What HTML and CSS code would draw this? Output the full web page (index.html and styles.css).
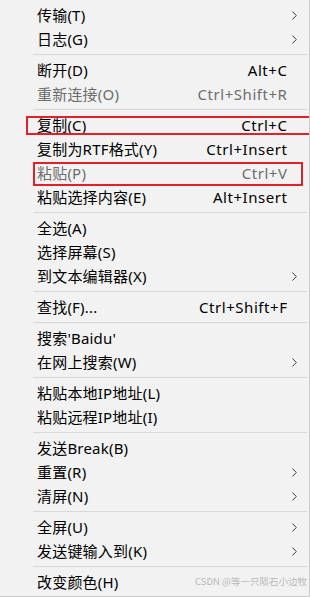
FILE: index.html
```html
<!DOCTYPE html>
<html lang="zh-CN">
<head>
<meta charset="utf-8">
<link rel="stylesheet" href="styles.css">
</head>
<body>
<div class="menu">
  <div class="item"><span class="label">传输(T)</span><span class="key"></span><span class="sub"><svg width="5" height="9" viewBox="0 0 5 9"><path d="M0.5 0.5 L4.3 4.5 L0.5 8.5" fill="none" stroke="#404040" stroke-width="1"/></svg></span></div>
  <div class="item"><span class="label">日志(G)</span><span class="key"></span><span class="sub"><svg width="5" height="9" viewBox="0 0 5 9"><path d="M0.5 0.5 L4.3 4.5 L0.5 8.5" fill="none" stroke="#404040" stroke-width="1"/></svg></span></div>
  <div class="sep"></div>
  <div class="item"><span class="label">断开(D)</span><span class="key">Alt+C</span><span class="sub"></span></div>
  <div class="item disabled"><span class="label">重新连接(O)</span><span class="key">Ctrl+Shift+R</span><span class="sub"></span></div>
  <div class="sep"></div>
  <div class="item"><span class="label">复制(C)</span><span class="key">Ctrl+C</span><span class="sub"></span><span class="mark mark-copy"></span></div>
  <div class="item"><span class="label">复制为RTF格式(Y)</span><span class="key">Ctrl+Insert</span><span class="sub"></span></div>
  <div class="item disabled"><span class="label">粘贴(P)</span><span class="key">Ctrl+V</span><span class="sub"></span><span class="mark mark-paste"></span></div>
  <div class="item"><span class="label">粘贴选择内容(E)</span><span class="key">Alt+Insert</span><span class="sub"></span></div>
  <div class="sep"></div>
  <div class="item"><span class="label">全选(A)</span><span class="key"></span><span class="sub"></span></div>
  <div class="item"><span class="label">选择屏幕(S)</span><span class="key"></span><span class="sub"></span></div>
  <div class="item"><span class="label">到文本编辑器(X)</span><span class="key"></span><span class="sub"><svg width="5" height="9" viewBox="0 0 5 9"><path d="M0.5 0.5 L4.3 4.5 L0.5 8.5" fill="none" stroke="#404040" stroke-width="1"/></svg></span></div>
  <div class="sep"></div>
  <div class="item"><span class="label">查找(F)...</span><span class="key">Ctrl+Shift+F</span><span class="sub"></span></div>
  <div class="sep"></div>
  <div class="item"><span class="label">搜索'Baidu'</span><span class="key"></span><span class="sub"></span></div>
  <div class="item"><span class="label">在网上搜索(W)</span><span class="key"></span><span class="sub"><svg width="5" height="9" viewBox="0 0 5 9"><path d="M0.5 0.5 L4.3 4.5 L0.5 8.5" fill="none" stroke="#404040" stroke-width="1"/></svg></span></div>
  <div class="sep"></div>
  <div class="item"><span class="label">粘贴本地IP地址(L)</span><span class="key"></span><span class="sub"></span></div>
  <div class="item"><span class="label">粘贴远程IP地址(I)</span><span class="key"></span><span class="sub"></span></div>
  <div class="sep"></div>
  <div class="item"><span class="label">发送Break(B)</span><span class="key"></span><span class="sub"></span></div>
  <div class="item"><span class="label">重置(R)</span><span class="key"></span><span class="sub"><svg width="5" height="9" viewBox="0 0 5 9"><path d="M0.5 0.5 L4.3 4.5 L0.5 8.5" fill="none" stroke="#404040" stroke-width="1"/></svg></span></div>
  <div class="item"><span class="label">清屏(N)</span><span class="key"></span><span class="sub"><svg width="5" height="9" viewBox="0 0 5 9"><path d="M0.5 0.5 L4.3 4.5 L0.5 8.5" fill="none" stroke="#404040" stroke-width="1"/></svg></span></div>
  <div class="sep"></div>
  <div class="item"><span class="label">全屏(U)</span><span class="key"></span><span class="sub"><svg width="5" height="9" viewBox="0 0 5 9"><path d="M0.5 0.5 L4.3 4.5 L0.5 8.5" fill="none" stroke="#404040" stroke-width="1"/></svg></span></div>
  <div class="item"><span class="label">发送键输入到(K)</span><span class="key"></span><span class="sub"><svg width="5" height="9" viewBox="0 0 5 9"><path d="M0.5 0.5 L4.3 4.5 L0.5 8.5" fill="none" stroke="#404040" stroke-width="1"/></svg></span></div>
  <div class="sep"></div>
  <div class="item"><span class="label">改变颜色(H)</span><span class="key"></span><span class="sub"></span><span class="watermark">CSDN @等一只陨石小边牧</span></div>
</div>
</body>
</html>
```
FILE: styles.css
```css
html, body {
  margin: 0;
  padding: 0;
  background: #f2f2f2;
}
body {
  width: 310px;
  height: 597px;
  overflow: hidden;
}
.menu {
  position: relative;
  box-sizing: border-box;
  width: 310px;
  height: 597px;
  padding: 3px 0 3px 0;
  background: #f2f2f2;
  border-right: 1px solid #cccccc;
  border-bottom: 1px solid #cccccc;
  font-family: "Noto Sans", "Noto Sans CJK SC", sans-serif;
  font-size: 15px;
  color: #000;
  overflow: hidden;
}
.item {
  position: relative;
  display: grid;
  grid-template-columns: 1fr auto 22px;
  align-items: center;
  height: 24px;
  line-height: 22px;
}
.label {
  padding-left: 37px;
  white-space: nowrap;
  letter-spacing: 0.2px;
}
.key {
  white-space: nowrap;
  letter-spacing: 0.55px;
  margin-right: -0.5px;
}
.sub {
  display: flex;
  align-items: center;
  padding-left: 5px;
}
.sub svg {
  display: block;
}
.disabled {
  color: #6d6d6d;
}
.sep {
  height: 7px;
  display: flex;
  align-items: center;
  margin: 0 2px 0 33px;
}
.sep::before {
  content: "";
  display: block;
  width: 100%;
  height: 1px;
  background: #d7d7d7;
}
.mark {
  position: absolute;
  box-sizing: border-box;
  border: 2px solid #e3202a;
}
.mark-copy {
  left: 26px;
  top: 3px;
  width: 283px;
  height: 19px;
  border-right: 0;
}
.mark-paste {
  left: 33px;
  top: 1px;
  width: 270px;
  height: 24px;
}
.watermark {
  position: absolute;
  right: 2px;
  top: 5px;
  font-family: "Noto Sans CJK SC", sans-serif;
  font-size: 9.5px;
  line-height: 12px;
  letter-spacing: 0;
  color: #b8b8b8;
  white-space: nowrap;
}
```
